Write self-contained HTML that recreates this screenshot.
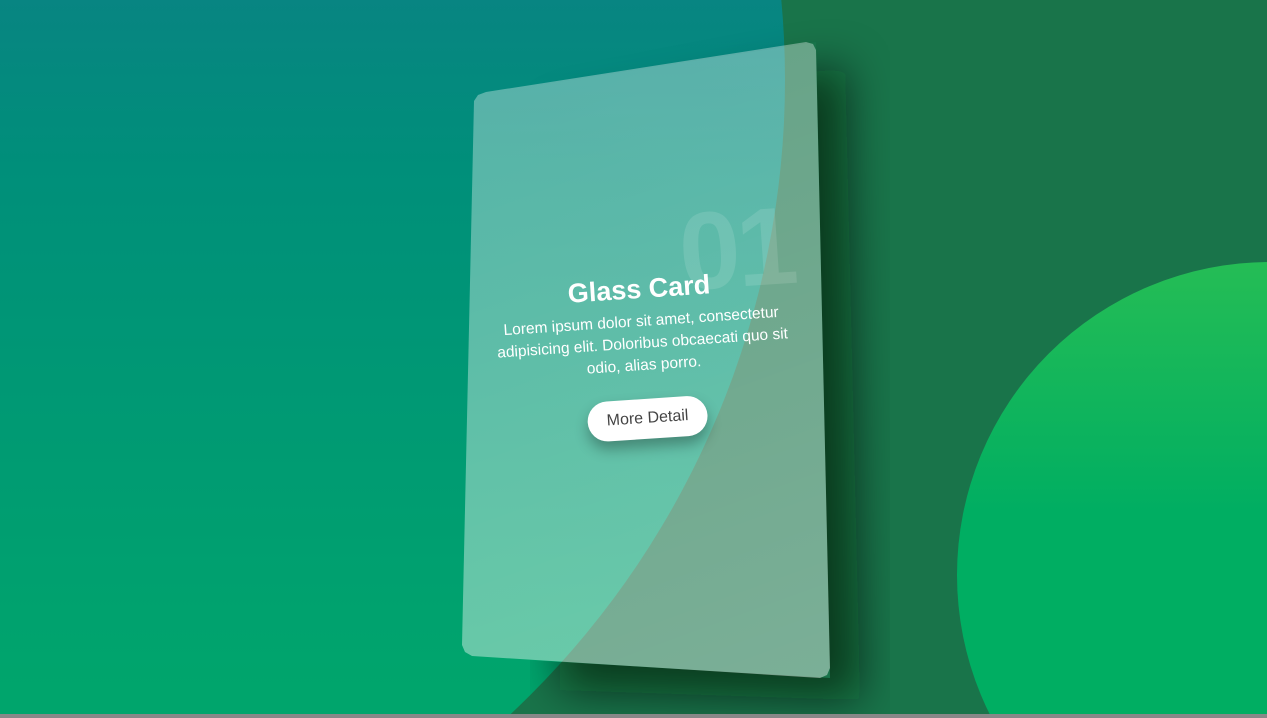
<!DOCTYPE html>
<html><head><meta charset="utf-8"><style>
html,body{margin:0;padding:0;width:1267px;height:718px;overflow:hidden;background:#19744a;font-family:"Liberation Sans",sans-serif}
.wrap{position:relative;width:1267px;height:718px;overflow:hidden}
.c1{position:absolute;left:-955px;top:-790px;width:1740px;height:1740px;border-radius:50%;background:linear-gradient(180deg,#0c7f86 40%,#008f7a 55%,#00a56c 85%)}
.c2{position:absolute;left:957px;top:262px;width:626px;height:626px;border-radius:50%;background:linear-gradient(180deg,#25bd55,#00ae62 40%)}
.shadow{position:absolute;left:0;top:0}
.card{position:absolute;left:0;top:0;width:1267px;height:718px;clip-path:polygon(474px 101px,478px 95px,486px 92px,806px 42px,813px 44px,816px 50px,830px 668px,827px 675px,820px 678px,472px 656px,465px 652px,462px 645px);background:linear-gradient(160deg,rgba(255,255,255,0.3),rgba(255,255,255,0.45))}
.content{position:absolute;left:482px;top:200px;width:318px;text-align:center;transform:rotate(-3.8deg);color:#fff}
.num{position:absolute;right:2px;top:-8px;font-size:110px;font-weight:bold;color:rgba(255,255,255,0.12);letter-spacing:-4px}
h2{position:relative;margin:74px 0 6px;font-size:27px;font-weight:bold}
p{position:relative;margin:0;font-size:15.5px;line-height:22px}
.btn{display:inline-block;margin-top:22px;background:#fff;color:#444;font-size:16px;padding:11px 19px;border-radius:22px;box-shadow:0 8px 14px rgba(0,0,0,0.3)}
.bar{position:absolute;left:0;top:714px;width:1267px;height:4px;background:#888}
</style></head><body><div class="wrap">
<div class="c1"></div>
<div class="c2"></div>
<svg class="shadow" width="1267" height="718"><defs><filter id="b" filterUnits="userSpaceOnUse" x="0" y="0" width="1267" height="718"><feGaussianBlur stdDeviation="22"/></filter>
<mask id="m"><rect width="1267" height="718" fill="#fff"/><polygon points="474,95 816,42 830,678 462,656" fill="#000"/></mask></defs>
<g mask="url(#m)"><polygon points="560,120 845,65 860,700 560,690" fill="rgba(0,25,10,0.6)" filter="url(#b)"/></g></svg>
<div class="card"></div>
<div class="content"><div class="num">01</div><h2>Glass Card</h2><p>Lorem ipsum dolor sit amet, consectetur adipisicing elit. Doloribus obcaecati quo sit odio, alias porro.</p><div class="btn">More Detail</div></div>
<div class="bar"></div>
</div></body></html>
